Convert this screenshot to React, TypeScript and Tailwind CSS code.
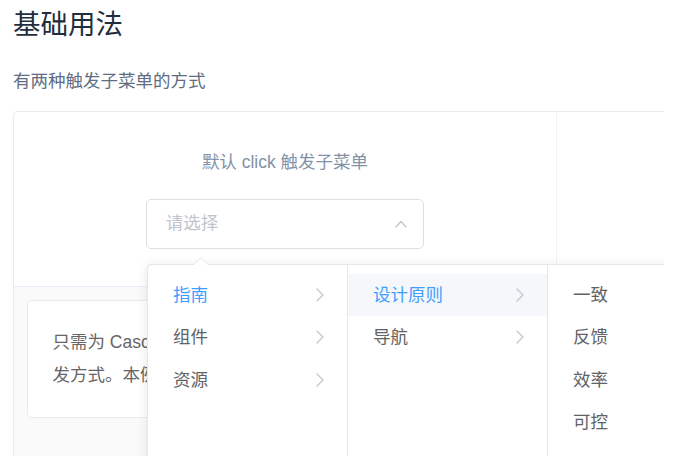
import React from "react";

const fontStack = {
  fontFamily: '"Liberation Sans", "Noto Sans CJK SC", sans-serif',
};

function ChevronRight() {
  return (
    <svg width="8" height="14" viewBox="0 0 8 14" fill="none">
      <path d="M1 1l6 6-6 6" stroke="#c0c4cc" strokeWidth="1.2" strokeLinecap="round" strokeLinejoin="round" />
    </svg>
  );
}

type Item = { label: string; active?: boolean; hover?: boolean; leaf?: boolean };

function MenuColumn({ items, last }: { items: Item[]; last?: boolean }) {
  return (
    <div className={`w-[200px] shrink-0 h-[255px] pt-[8.5px] pb-[7.5px] ${last ? "" : "border-r border-[#e4e7ed]"}`}>
      {items.map((it) => (
        <div
          key={it.label}
          className={`h-[42.5px] flex items-center justify-between pl-[25px] pr-[23px] text-[17.5px] ${
            it.hover ? "bg-[#f5f7fa]" : ""
          } ${it.active ? "text-[#409eff]" : "text-[#606266]"}`}
        >
          <span>{it.label}</span>
          {!it.leaf && <ChevronRight />}
        </div>
      ))}
    </div>
  );
}

export default function App() {
  return (
    <div className="w-[693px] h-[472px] bg-white" style={fontStack}>
      <div className="relative w-[664px] h-[456px] overflow-hidden pl-[13px]">
        <h3 className="pt-[5px] text-[27.5px] leading-[40px] font-normal text-[#1f2f3d]">基础用法</h3>
        <p className="mt-[22.5px] text-[17.5px] leading-[27px] text-[#5e6d82]">有两种触发子菜单的方式</p>

        <div className="mt-[16.5px] w-[1088px] border border-[#ebebeb] rounded-[4px]">
          <div className="flex border-b border-[#eaeefb]">
            <div className="w-1/2 border-r border-[#eff2f6] py-[37.5px] flex flex-col items-center">
              <span className="text-[17.5px] leading-[24px] text-[#8492a6] mb-[25px]">默认 click 触发子菜单</span>
              <div className="w-[277.5px] h-[50px] border border-[#dcdfe6] rounded-[5px] flex items-center justify-between pl-[18.5px] pr-[16px]">
                <span className="text-[17.5px] text-[#c0c4cc]">请选择</span>
                <svg width="12" height="8" viewBox="0 0 12 8" fill="none">
                  <path d="M1 7l5-5.5L11 7" stroke="#c0c4cc" strokeWidth="1.3" strokeLinecap="round" strokeLinejoin="round" />
                </svg>
              </div>
            </div>
            <div className="w-1/2 py-[37.5px] flex flex-col items-center">
              <span className="text-[17.5px] leading-[24px] text-[#8492a6] mb-[25px]">hover 触发子菜单</span>
              <div className="w-[277.5px] h-[50px] border border-[#dcdfe6] rounded-[5px]" />
            </div>
          </div>
          <div className="bg-[#fafafa] h-[300px] pt-[12.5px] px-[12.5px]">
            <div className="bg-white border border-[#ebebeb] rounded-[4px] p-[25px] text-[17.5px] leading-[33px] text-[#666]">
              只需为 Cascader 的 options 属性指定选项数组即可渲染出一个级联选择器。通过 expand-trigger 可以定义展开子级菜单的触
              <br />
              发方式。本例还展示了 change 事件，它的回调参数为 Cascader 的绑定值：一个由各级菜单的值所组成的数组。
            </div>
          </div>
        </div>

        <div className="absolute left-[147px] top-[264px] bg-white border border-[#e4e7ed] rounded-[4px] shadow-[0_2px_12px_rgba(0,0,0,0.1)] flex">
          <div className="absolute -top-[8px] left-[45px] w-0 h-0 border-x-[8px] border-x-transparent border-b-[8px] border-b-[#e4e7ed]" />
          <div className="absolute -top-[7px] left-[46px] w-0 h-0 border-x-[7px] border-x-transparent border-b-[7px] border-b-white" />
          <MenuColumn
            items={[
              { label: "指南", active: true },
              { label: "组件" },
              { label: "资源" },
            ]}
          />
          <MenuColumn
            items={[
              { label: "设计原则", active: true, hover: true },
              { label: "导航" },
            ]}
          />
          <MenuColumn
            last
            items={[
              { label: "一致", leaf: true },
              { label: "反馈", leaf: true },
              { label: "效率", leaf: true },
              { label: "可控", leaf: true },
            ]}
          />
        </div>
      </div>
    </div>
  );
}
